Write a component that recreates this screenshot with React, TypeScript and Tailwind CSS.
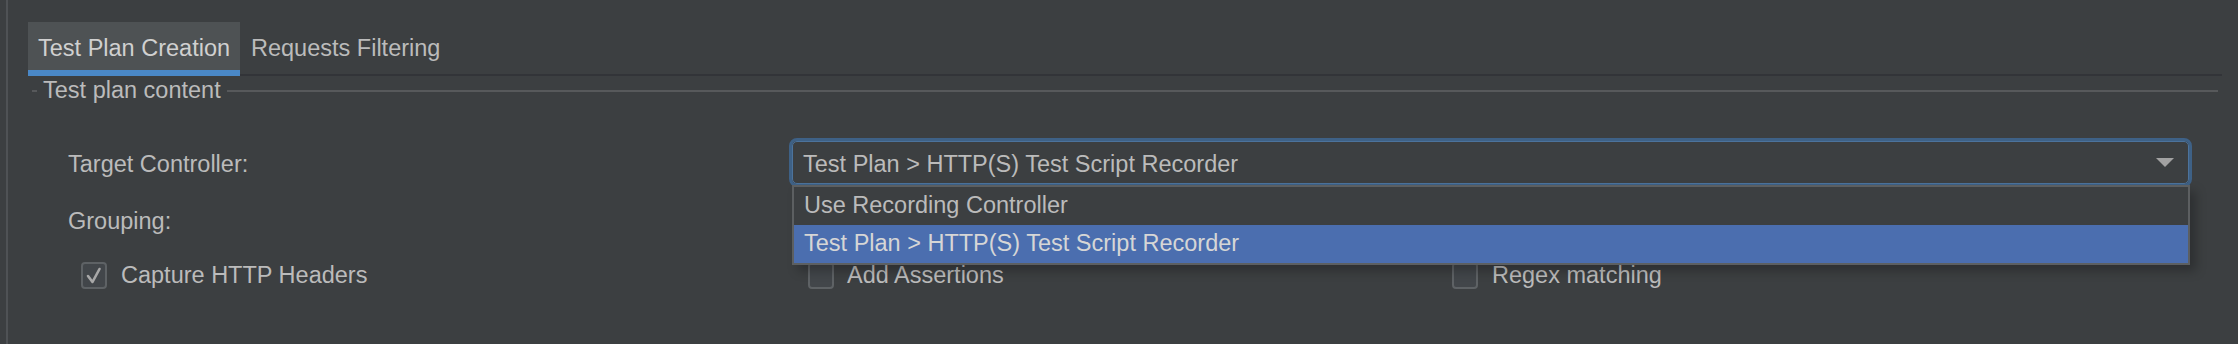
import React from "react";

function Box({ checked }: { checked?: boolean }) {
  return (
    <div className="w-[26px] h-[27px] rounded-[4px] border-2 border-[#5e6265] bg-[#42464a] flex items-center justify-center shrink-0">
      {checked && (
        <svg width="22" height="22" viewBox="0 0 22 22">
          <polyline points="5,11 9.5,17 16.5,4" fill="none" stroke="#a8a8a8" strokeWidth="2.6" strokeLinecap="round" strokeLinejoin="round" />
        </svg>
      )}
    </div>
  );
}

export default function App() {
  return (
    <div className="w-[2238px] h-[344px] bg-[#3c3f41] flex text-[23.5px] leading-none text-[#bbbbbb] font-['Liberation_Sans',Arial,sans-serif] overflow-hidden">
      <div className="w-[6px] shrink-0" />
      <div className="w-[2px] bg-[#4f5255] shrink-0" />
      <div className="flex-1 flex flex-col">
        {/* tabs */}
        <div className="mt-[22px] ml-[20px] mr-[16px] flex h-[54px]">
          <div className="flex flex-col w-[212px]">
            <div className="h-[48px] bg-[#4e5254] flex items-center pl-[10px] pt-[5px] text-[#d0d0d0]">Test Plan Creation</div>
            <div className="h-[6px] bg-[#4a88c7]" />
          </div>
          <div className="flex-1 flex border-b-2 border-[#323438]">
            <div className="h-[48px] flex items-center pl-[11px] pt-[5px]">Requests Filtering</div>
          </div>
        </div>

        {/* titled border */}
        <div className="ml-[24px] mr-[20px] h-[30px] flex items-center">
          <div className="w-[5px] h-[2px] bg-[#57595b]" />
          <span className="mx-[6px]">Test plan content</span>
          <div className="flex-1 h-[2px] bg-[#57595b]" />
        </div>

        {/* target controller */}
        <div className="mt-[32px] h-[49px] flex items-center">
          <div className="w-[781px] pl-[60px] pt-[5px]">Target Controller:</div>
          <div className="relative w-[1403px] h-[49px] rounded-[8px] border-[3px] border-[#3e6186]">
            <div className="h-full rounded-[5px] border-[1.5px] border-[#4c739c] bg-[#3c3f41] flex items-center pl-[10px] pr-[14px]">
              <span className="flex-1 pt-[4px]">Test Plan &gt; HTTP(S) Test Script Recorder</span>
              <svg width="18" height="10" viewBox="0 0 18 10">
                <polygon points="0,0 18,0 9,9" fill="#a2a2a2" />
              </svg>
            </div>
            <div className="absolute left-0 top-[calc(100%+1px)] w-[1398px] border-2 border-[#5c5f61] bg-[#3c3f41] shadow-[6px_6px_10px_rgba(0,0,0,0.25)] z-10">
              <div className="h-[38px] flex items-center pl-[10px]">Use Recording Controller</div>
              <div className="h-[38px] flex items-center pl-[10px] bg-[#4b6eaf] text-[#d6d6d6]">Test Plan &gt; HTTP(S) Test Script Recorder</div>
            </div>
          </div>
        </div>

        {/* grouping */}
        <div className="mt-[15px] h-[40px] flex items-center pl-[60px]">Grouping:</div>

        {/* checkboxes */}
        <div className="mt-[20px] h-[27px] flex items-center pl-[73px]">
          <div className="w-[727px] flex items-center gap-[14px]">
            <Box checked />
            <span className="pt-[1px]">Capture HTTP Headers</span>
          </div>
          <div className="w-[644px] flex items-center gap-[13px]">
            <Box />
            <span className="pt-[1px]">Add Assertions</span>
          </div>
          <div className="flex items-center gap-[14px]">
            <Box />
            <span className="pt-[1px]">Regex matching</span>
          </div>
        </div>
      </div>
    </div>
  );
}
